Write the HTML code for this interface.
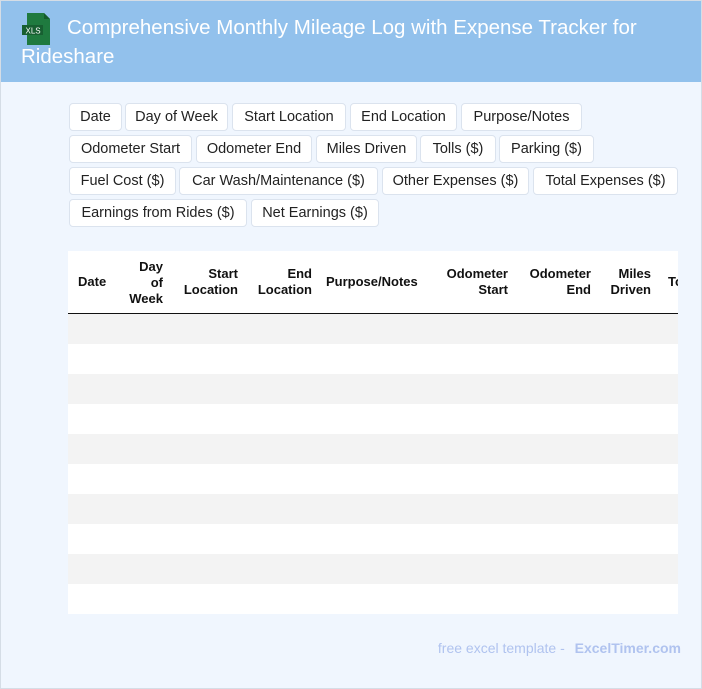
<!DOCTYPE html>
<html><head><meta charset="utf-8"><style>
*{box-sizing:border-box;margin:0;padding:0}
body{width:702px;height:689px;background:#f0f6fe;font-family:"Liberation Sans",sans-serif;position:relative;overflow:hidden}
.frame{position:absolute;left:0;top:0;width:702px;height:689px;border:1px solid #d5dde6;z-index:5}
.hdr{position:absolute;left:0;top:0;width:702px;height:82px;background:#92c1ec}
.title{position:absolute;left:21px;top:13px;width:670px;color:#fff;font-size:20.5px;line-height:29px;text-indent:46px}
.icon{position:absolute;left:21px;top:13px}
.tag{position:absolute;height:28px;background:#fff;border:1px solid #dbe3ee;border-radius:4px;font-size:14.5px;line-height:26px;text-align:center;color:#222}
.tbl{position:absolute;left:68px;top:251px;width:610px;height:363px;background:#fff;overflow:hidden}
.th{position:absolute;font-weight:bold;font-size:13px;line-height:16px;color:#111}
.r{text-align:right}
.line{position:absolute;left:0;top:62px;width:610px;height:1px;background:#111}
.row{position:absolute;left:0;width:610px;height:30px}
.g{background:#f3f3f3}
.foot{position:absolute;right:21px;top:640px;font-size:14px;color:#b0c3ef}
.foot b{margin-left:6px}
</style></head><body>
<div class="frame"></div>
<div class="hdr">
<svg class="icon" width="30" height="32" viewBox="0 0 30 32"><path d="M6 0h17l6 6v26H6z" fill="#1f7a3f"/><path d="M23 0v6h6z" fill="#145c2d"/><rect x="1" y="12" width="21" height="10" fill="#175f31"/><text x="4.5" y="20.5" font-size="8" fill="#fff" font-family="Liberation Sans">XLS</text></svg>
<div class="title">Comprehensive Monthly Mileage Log with Expense Tracker for Rideshare</div>
</div>
<div class="tag" style="left:69px;top:103px;width:53px">Date</div>
<div class="tag" style="left:125px;top:103px;width:103px">Day of Week</div>
<div class="tag" style="left:232px;top:103px;width:114px">Start Location</div>
<div class="tag" style="left:350px;top:103px;width:107px">End Location</div>
<div class="tag" style="left:461px;top:103px;width:121px">Purpose/Notes</div>
<div class="tag" style="left:69px;top:135px;width:123px">Odometer Start</div>
<div class="tag" style="left:196px;top:135px;width:116px">Odometer End</div>
<div class="tag" style="left:316px;top:135px;width:101px">Miles Driven</div>
<div class="tag" style="left:420px;top:135px;width:76px">Tolls ($)</div>
<div class="tag" style="left:499px;top:135px;width:95px">Parking ($)</div>
<div class="tag" style="left:69px;top:167px;width:107px">Fuel Cost ($)</div>
<div class="tag" style="left:179px;top:167px;width:199px">Car Wash/Maintenance ($)</div>
<div class="tag" style="left:382px;top:167px;width:147px">Other Expenses ($)</div>
<div class="tag" style="left:533px;top:167px;width:145px">Total Expenses ($)</div>
<div class="tag" style="left:69px;top:199px;width:178px">Earnings from Rides ($)</div>
<div class="tag" style="left:251px;top:199px;width:128px">Net Earnings ($)</div>
<div class="tbl">
<div class="th" style="left:10px;top:23px">Date</div>
<div class="th r" style="right:515px;top:8px">Day<br>of<br>Week</div>
<div class="th r" style="right:440px;top:15px">Start<br>Location</div>
<div class="th r" style="right:366px;top:15px">End<br>Location</div>
<div class="th" style="left:258px;top:23px">Purpose/Notes</div>
<div class="th r" style="right:170px;top:15px">Odometer<br>Start</div>
<div class="th r" style="right:87px;top:15px">Odometer<br>End</div>
<div class="th r" style="right:27px;top:15px">Miles<br>Driven</div>
<div class="th" style="left:600px;top:23px">Tolls</div>
<div class="line"></div>
<div class="row g" style="top:63px"></div>
<div class="row g" style="top:123px"></div>
<div class="row g" style="top:183px"></div>
<div class="row g" style="top:243px"></div>
<div class="row g" style="top:303px"></div>
</div>
<div class="foot">free excel template - <b>ExcelTimer.com</b></div>
</body></html>
